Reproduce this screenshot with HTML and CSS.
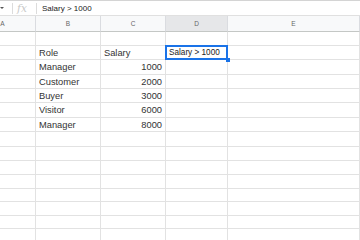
FILE: index.html
```html
<!DOCTYPE html>
<html>
	<head>
		<meta charset="utf-8">
		<title>Sheet</title>
		<link rel="stylesheet" href="styles.css">
	</head>
	<body>
		<div class="formula-bar">
			<span class="caret"></span>
			<span class="sep"></span>
			<span class="fx">fx</span>
			<span class="sep"></span>
			<span class="formula">Salary &gt; 1000</span>
		</div>

		<div class="sheet">
			<div class="col-head">A</div>
			<div class="col-head">B</div>
			<div class="col-head">C</div>
			<div class="col-head active">D</div>
			<div class="col-head">E</div>

			<div class="cell"></div><div class="cell"></div><div class="cell"></div><div class="cell"></div><div class="cell"></div>

			<div class="cell"></div>
			<div class="cell">Role</div>
			<div class="cell">Salary</div>
			<div class="cell selected"><span class="edit">Salary &gt; 1000</span><span class="handle"></span></div>
			<div class="cell"></div>

			<div class="cell"></div><div class="cell">Manager</div><div class="cell num">1000</div><div class="cell"></div><div class="cell"></div>
			<div class="cell"></div><div class="cell">Customer</div><div class="cell num">2000</div><div class="cell"></div><div class="cell"></div>
			<div class="cell"></div><div class="cell">Buyer</div><div class="cell num">3000</div><div class="cell"></div><div class="cell"></div>
			<div class="cell"></div><div class="cell">Visitor</div><div class="cell num">6000</div><div class="cell"></div><div class="cell"></div>
			<div class="cell"></div><div class="cell">Manager</div><div class="cell num">8000</div><div class="cell"></div><div class="cell"></div>

			<div class="cell"></div><div class="cell"></div><div class="cell"></div><div class="cell"></div><div class="cell"></div>
			<div class="cell"></div><div class="cell"></div><div class="cell"></div><div class="cell"></div><div class="cell"></div>
			<div class="cell"></div><div class="cell"></div><div class="cell"></div><div class="cell"></div><div class="cell"></div>
			<div class="cell"></div><div class="cell"></div><div class="cell"></div><div class="cell"></div><div class="cell"></div>
			<div class="cell"></div><div class="cell"></div><div class="cell"></div><div class="cell"></div><div class="cell"></div>
			<div class="cell"></div><div class="cell"></div><div class="cell"></div><div class="cell"></div><div class="cell"></div>
			<div class="cell"></div><div class="cell"></div><div class="cell"></div><div class="cell"></div><div class="cell"></div>
			<div class="cell"></div><div class="cell"></div><div class="cell"></div><div class="cell"></div><div class="cell"></div>
		</div>
	</body>
</html>
```

FILE: styles.css
```css
* {
	margin: 0;
	padding: 0;
	box-sizing: border-box;
}
body {
	width: 360px;
	height: 240px;
	overflow: hidden;
	background: #fff;
	font-family: "Liberation Sans", Arial, sans-serif;
	color: #333;
}
.formula-bar {
	height: 16px;
	border-top: 1px solid #d4d4d4;
	border-bottom: 1px solid #e0e0e0;
	display: flex;
	align-items: center;
}
.caret {
	width: 0;
	height: 0;
	border-left: 2px solid transparent;
	border-right: 2px solid transparent;
	border-top: 2px solid #555;
	margin-right: 8px;
}
.sep {
	width: 1px;
	height: 11px;
	background: #dcdcdc;
}
.fx {
	font-family: "DejaVu Serif", serif;
	font-style: italic;
	font-size: 10.5px;
	color: #c8c8c8;
	width: 23px;
	padding-left: 4px;
}
.formula {
	font-size: 8px;
	padding-left: 5px;
	color: #222;
}
.sheet {
	display: grid;
	margin-left: -30px;
	grid-template-columns: 66px 65px 65px 62px 132px;
	grid-template-rows: 16px 14px 14px 15px 14px 14px 15px 14px 15px 14px 14px 14px 13px 14px 13px 14px;
}
.col-head {
	background: #f8f9fa;
	border-right: 1px solid #dadce0;
	border-bottom: 1px solid #c4c7c5;
	font-size: 6.5px;
	color: #666;
	display: flex;
	align-items: center;
	justify-content: center;
}
.col-head.active {
	background: #e6e7e9;
}
.cell {
	border-right: 1px solid #e2e2e2;
	border-bottom: 1px solid #e2e2e2;
	font-size: 9.3px;
	padding: 0 3px;
	display: flex;
	align-items: center;
	white-space: nowrap;
}
.cell.num {
	justify-content: flex-end;
}
.cell.selected {
	position: relative;
	font-size: 8.2px;
	color: #222;
}
.cell.selected::before {
	content: "";
	position: absolute;
	left: -1px;
	top: -1px;
	right: -1px;
	bottom: -1px;
	border: 2px solid #1a73e8;
}
.handle {
	position: absolute;
	right: -3px;
	bottom: -3px;
	width: 4px;
	height: 4px;
	background: #1a73e8;
}
```
